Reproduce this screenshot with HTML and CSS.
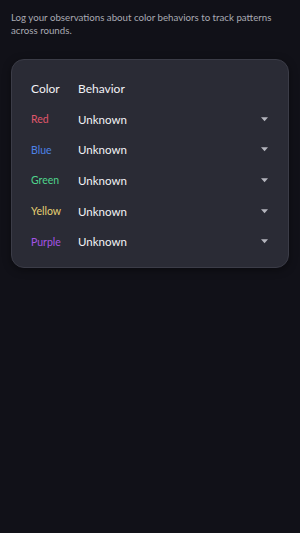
FILE: index.html
```html
<!DOCTYPE html>
<html lang="en">
<head>
  <meta charset="UTF-8">
  <meta name="viewport" content="width=device-width, initial-scale=1.0">
  <title>Color Log</title>
  <link rel="stylesheet" href="styles.css">
</head>
<body>
  <p class="intro">Log your observations about color behaviors to track patterns across rounds.</p>

  <div class="log-card">
    <div class="log-row head">
      <span>Color</span>
      <span>Behavior</span>
    </div>

    <div class="log-row">
      <span class="color red">Red</span>
      <div class="picker">Unknown
        <svg viewBox="0 0 8 5"><path d="M0 0h8L4 4.5z"/></svg>
      </div>
    </div>
    <div class="log-row">
      <span class="color blue">Blue</span>
      <div class="picker">Unknown
        <svg viewBox="0 0 8 5"><path d="M0 0h8L4 4.5z"/></svg>
      </div>
    </div>
    <div class="log-row">
      <span class="color green">Green</span>
      <div class="picker">Unknown
        <svg viewBox="0 0 8 5"><path d="M0 0h8L4 4.5z"/></svg>
      </div>
    </div>
    <div class="log-row">
      <span class="color yellow">Yellow</span>
      <div class="picker">Unknown
        <svg viewBox="0 0 8 5"><path d="M0 0h8L4 4.5z"/></svg>
      </div>
    </div>
    <div class="log-row">
      <span class="color purple">Purple</span>
      <div class="picker">Unknown
        <svg viewBox="0 0 8 5"><path d="M0 0h8L4 4.5z"/></svg>
      </div>
    </div>
  </div>
</body>
</html>
```

FILE: styles.css
```css
body {
  margin: 0;
  padding: 11px;
  background: #111118;
  font-family: "Lato", "Noto Sans", sans-serif;
  color: #fff;
  min-height: 533px;
  box-sizing: border-box;
}

.intro {
  margin: 0 0 22px;
  font-size: 9.7px;
  line-height: 13px;
  color: #a9aab3;
}

.log-card {
  background: #2a2b35;
  border: 1px solid #3b3c47;
  border-radius: 13px;
  padding: 12px 20px 10px 19px;
  box-shadow: 0 2px 8px rgba(0,0,0,0.4);
}

.log-row {
  display: grid;
  grid-template-columns: 47px 1fr;
  align-items: center;
  height: 30.6px;
  font-size: 11.5px;
}

.log-row.head {
  height: 32px;
  font-size: 12px;
  color: #f2f2f5;
}

.color {
  font-size: 10.5px;
}

.red { color: #e0566b; }
.blue { color: #4d82e6; }
.green { color: #4fd48c; }
.yellow { color: #e6cf73; }
.purple { color: #a554e6; }

.picker {
  display: flex;
  justify-content: space-between;
  align-items: center;
  color: #f4f4f7;
}

.picker svg {
  width: 7px;
  height: 5px;
  fill: #b4b5bd;
}
```
